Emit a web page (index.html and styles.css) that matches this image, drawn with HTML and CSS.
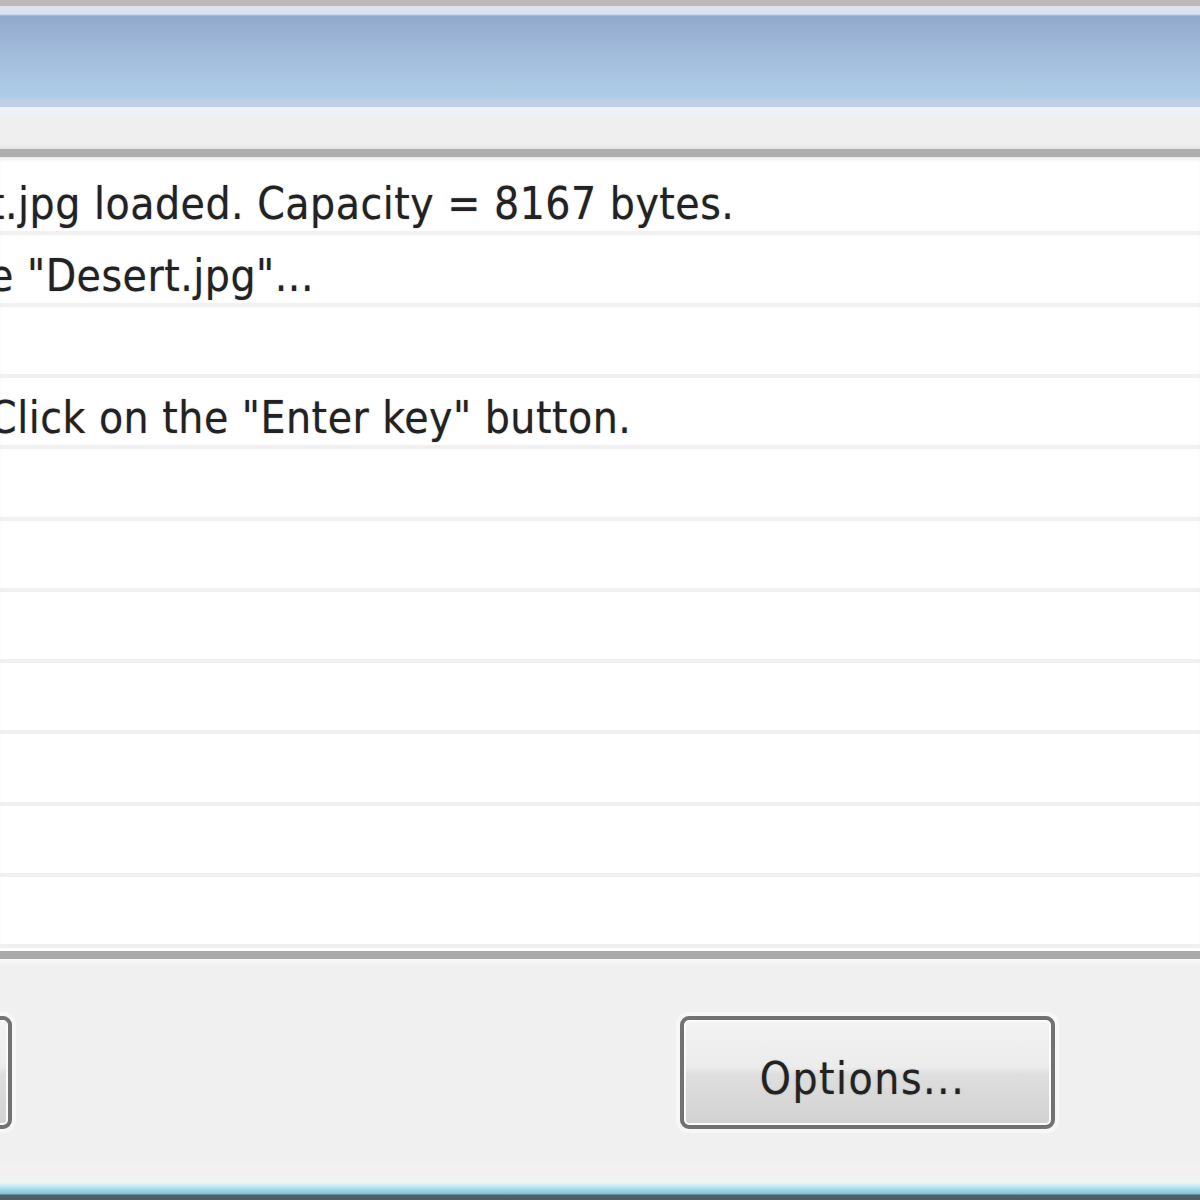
FILE: index.html
```html
<!DOCTYPE html>
<html lang="en">
<head>
<meta charset="utf-8">
<title>Log window</title>
<link rel="stylesheet" href="styles.css">
</head>
<body>
<div class="window">
  <div class="frame-top"></div>
  <div class="titlebar"></div>
  <div class="toolbar"></div>
  <div class="log">
    <div class="log-row"><span class="msg">t.jpg loaded. Capacity = 8167 bytes.</span></div>
    <div class="log-row"><span class="msg">e "Desert.jpg"...</span></div>
    <div class="log-row"></div>
    <div class="log-row"><span class="msg">Click on the "Enter key" button.</span></div>
    <div class="log-row"></div>
    <div class="log-row"></div>
    <div class="log-row"></div>
    <div class="log-row"></div>
    <div class="log-row"></div>
    <div class="log-row"></div>
    <div class="log-row"></div>
  </div>
  <div class="footer">
    <button class="btn">Enter key</button>
    <button class="btn">Options...</button>
  </div>
  <div class="bottom-edge"></div>
</div>
</body>
</html>
```

FILE: styles.css
```css
html, body {
  margin: 0;
  padding: 0;
}
body {
  width: 1200px;
  height: 1200px;
  overflow: hidden;
  background: #f0f0f0;
  font-family: "DejaVu Sans Condensed", "DejaVu Sans", sans-serif;
}
.window {
  display: flex;
  flex-direction: column;
  width: 1200px;
  height: 1200px;
}
.frame-top {
  height: 6px;
  background: #bcb8b8;
}
.titlebar {
  height: 102px;
  background: linear-gradient(to bottom,
    #dde4ee 0px, #dde4ee 8px,
    #91aacc 10px,
    #a3bddd 50px,
    #aecce6 90px,
    #c0cfe6 94px, #c2d0e6 102px);
}
.toolbar {
  height: 42px;
  background: linear-gradient(to bottom,
    #edf2f9 0px, #eef2f8 8px,
    #efefef 10px, #efefef 36px, #e6e6e6 42px);
}
.log {
  height: 792px;
  background: #ffffff;
  border-top: 8px solid #adadad;
  border-bottom: 8px solid #aaaaaa;
  box-shadow: inset 0 4px 4px -2px #e4e4e4;
  padding-top: 7px;
  box-sizing: content-box;
  overflow: hidden;
  display: flex;
  flex-direction: column;
}
.log-row {
  height: 71.3px;
  flex: none;
  box-sizing: border-box;
  border-bottom: 4px solid #f0f0f0;
  display: flex;
  align-items: center;
  padding-top: 12px;
  overflow: hidden;
}
.msg {
  margin-left: -11px;
  white-space: nowrap;
  font-size: 44px;
  color: #222222;
  letter-spacing: 0.5px;
  text-shadow: 0 0 1.5px rgba(0, 0, 0, 0.35);
}
.footer {
  height: 205px;
  box-sizing: border-box;
  margin-left: -363px;
  padding: 57px 145px 0 0;
  display: flex;
  justify-content: space-between;
  align-items: flex-start;
  background: linear-gradient(to bottom, #f8f8f8 0px, #f0f0f0 8px, #f0f0f0 100%);
}
.btn {
  width: 375px;
  height: 113px;
  border: 4px solid #727272;
  border-radius: 9px;
  background: linear-gradient(to bottom,
    #f3f3f3 0%, #ececec 45%, #dedede 52%, #d2d2d2 100%);
  box-shadow: inset 0 0 0 2px #fbfbfb, 0 0 0 4px #f7f7f7;
  font-family: "DejaVu Sans Condensed", "DejaVu Sans", sans-serif;
  font-size: 44px;
  color: #222222;
  letter-spacing: 1.5px;
  text-shadow: 0 0 1.5px rgba(0, 0, 0, 0.35);
  padding: 12px 10px 0 0;
}
.bottom-edge {
  height: 37px;
  background: linear-gradient(to bottom,
    #f1f1f1 0px, #f4eff0 8px, #eef4f3 20px,
    #c3ecf4 23px, #7cc2d6 31px,
    #56626a 32px, #4f5b63 37px);
}
```
